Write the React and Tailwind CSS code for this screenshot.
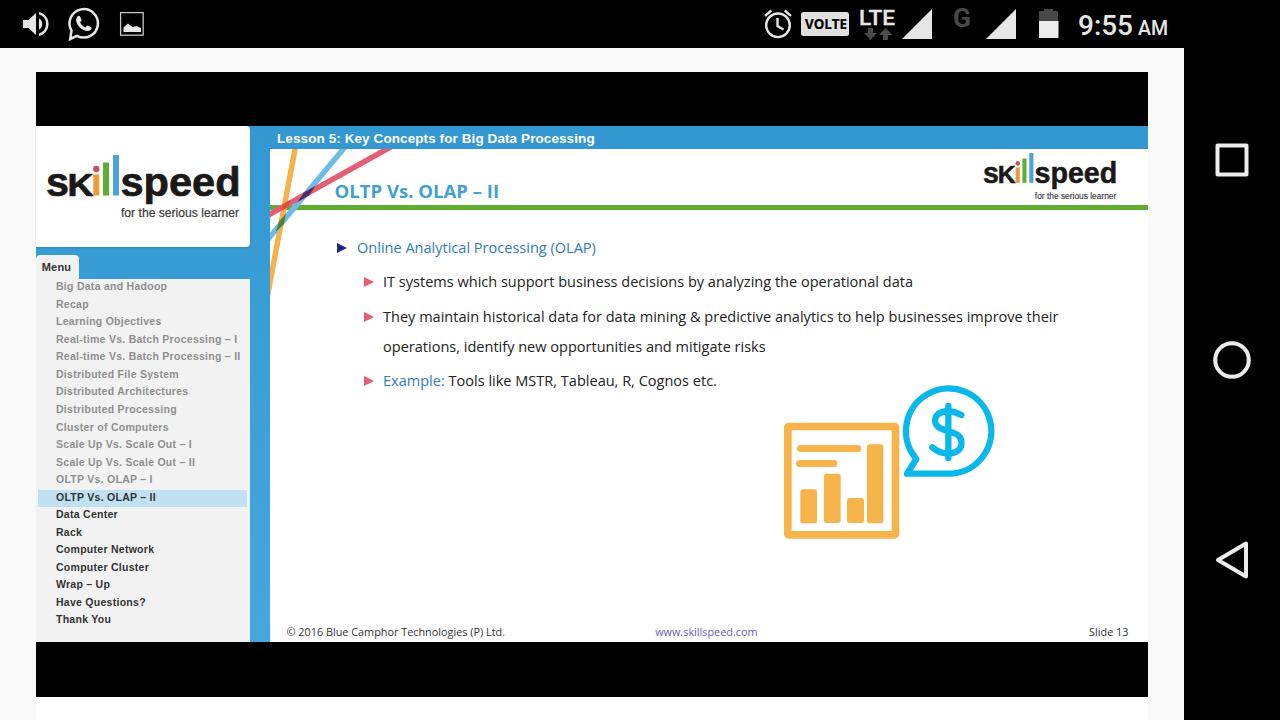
import React from "react";

const menuItems = [
  "Big Data and Hadoop",
  "Recap",
  "Learning Objectives",
  "Real-time Vs. Batch Processing – I",
  "Real-time Vs. Batch Processing – II",
  "Distributed File System",
  "Distributed Architectures",
  "Distributed Processing",
  "Cluster of Computers",
  "Scale Up Vs. Scale Out – I",
  "Scale Up Vs. Scale Out – II",
  "OLTP Vs. OLAP – I",
  "OLTP Vs. OLAP – II",
  "Data Center",
  "Rack",
  "Computer Network",
  "Computer Cluster",
  "Wrap – Up",
  "Have Questions?",
  "Thank You",
];
const activeIndex = 12;

function Logo({ className }) {
  return (
    <svg viewBox="0 0 194 68" preserveAspectRatio="none" className={className} fontFamily="'Liberation Sans', Arial, sans-serif">
      <g fontWeight="700" fill="#1b1818" stroke="#1b1818" strokeWidth="0.7">
        <text x="0" y="40.5" fontSize="41" textLength="23" lengthAdjust="spacingAndGlyphs">s</text>
        <text x="21.5" y="40.5" fontSize="32" textLength="26" lengthAdjust="spacingAndGlyphs">K</text>
        <text x="74.5" y="40.5" fontSize="41" textLength="120" lengthAdjust="spacingAndGlyphs">speed</text>
      </g>
      <rect x="47.3" y="19.5" width="6" height="21" fill="#ee9a3a" />
      <circle cx="50.3" cy="14" r="3.2" fill="#cf4a63" />
      <rect x="57" y="7.5" width="6" height="33" fill="#5fae33" />
      <rect x="67" y="0" width="6" height="40.5" fill="#4ba3d8" />
      <text x="75" y="62" fontSize="12" fill="#3a3a3a" stroke="#3a3a3a" strokeWidth="0.2" textLength="118" lengthAdjust="spacingAndGlyphs">
        for the serious learner
      </text>
    </svg>
  );
}

function StatusBar() {
  return (
    <header className="flex h-12 w-full shrink-0 bg-black">
      <svg viewBox="0 0 200 48" className="h-12 w-[200px]" fill="#e6e6e6">
        <path d="M23 20h5.5l7.5-7v22l-7.5-7H23z" />
        <path d="M39 18.5a6.3 6.3 0 0 1 0 11z" />
        <path d="M39 12v2.6a9.8 9.8 0 0 1 0 18.8V36a12.3 12.3 0 0 0 0-24z" />
        <path d="M71.5 30.500A14.2 14.2 0 1 1 77 35.800L70.2 39z" fill="none" stroke="#e6e6e6" strokeWidth="2.5" />
        <path d="M77.3 16.8c1-1.3 2.4-1.2 2.9 0l1.3 3.2c.2.8-1.3 2-1.4 2.5.9 2.2 3.3 4.2 5.3 4.9.8-.4 1.6-2 2.4-1.8l3.5 1.7c1 .7-.2 2.7-1.5 3.3-3.200 1.400-8.300-1.200-10.900-4.200-2.400-2.900-3.900-6.700-1.600-9.600z" />
        <rect x="120.6" y="12.6" width="22.6" height="22.6" fill="none" stroke="#c4c4c4" strokeWidth="1.3" />
        <path d="M123.500 32v-4.500l4.500-4 4.500 3.500 4-1 4.500 2v4z" />
      </svg>
      <div className="flex-1" />
      <svg viewBox="750 0 530 48" className="h-12 w-[530px]" fontFamily="Roboto, sans-serif">
        <g fill="none" stroke="#e6e6e6" strokeWidth="2.400">
          <circle cx="778" cy="25.300" r="11.800" />
          <path d="M777.500 18v8l6 3.500M765 15.800l6.300-5.300M791 15.800l-6.300-5.300" />
        </g>
        <rect x="801" y="12" width="48" height="24" rx="2.500" fill="#e0e0e0" />
        <text x="805" y="29" fontFamily="'Open Sans', sans-serif" fontWeight="700" fontSize="13.500" fill="#000" stroke="#000" strokeWidth="0.2" textLength="42" lengthAdjust="spacingAndGlyphs">VOLTE</text>
        <text x="859" y="25" fontWeight="500" fontSize="21" fill="#e6e6e6" stroke="#e6e6e6" strokeWidth="0.3" textLength="36" lengthAdjust="spacingAndGlyphs">LTE</text>
        <path d="M868 28h5v5h4l-6.500 7-6.500-7h4zM883 40h5v-5h4.500L885.500 28l-6.500 7h4z" fill="#4a4a4a" />
        <path d="M932 9v30h-30zM1016 9v30h-30z" fill="#e6e6e6" />
        <text x="953" y="27" fontWeight="700" fontSize="26" fill="#484848" textLength="18" lengthAdjust="spacingAndGlyphs">G</text>
        <path d="M1039 21v-10h5v-2h9v2h5v10z" fill="#484848" />
        <path d="M1039 21h19.500v17h-19.500z" fill="#ececec" />
        <g fill="#e6e6e6" fontWeight="500">
          <text x="1078" y="35" fontSize="28" textLength="55" lengthAdjust="spacingAndGlyphs">9:55</text>
          <text x="1138" y="35" fontSize="19.500" textLength="30" lengthAdjust="spacingAndGlyphs">AM</text>
        </g>
      </svg>
    </header>
  );
}

function Sidebar() {
  return (
    <aside className="flex w-[214px] shrink-0 flex-col">
      <div className="flex h-[121px] items-start rounded-r bg-white pt-[29px] pl-[10px] shadow-sm">
        <Logo className="h-[68px] w-[194px]" />
      </div>
      <div className="mt-2 flex h-6 w-[43px] items-center justify-center rounded-t bg-[#f2f2f2] pr-0.5 text-[11px] font-bold text-[#333]">
        <span className="tracking-[0.2px]">Menu</span>
      </div>
      <nav className="flex-1 overflow-hidden bg-[#f2f2f2] pt-[0.300px] pr-[3px] pl-[2px]">
        {menuItems.map((item, i) => (
          <div
            key={item}
            className={
              "h-[17.540px] pl-[18px] text-[10.500px] leading-[15px] font-bold tracking-[0.270px] whitespace-nowrap " +
              (i === activeIndex ? "bg-[#bfe1f1] text-[#333]" : i < activeIndex ? "text-[#8f8f8f]" : "text-[#333]")
            }
          >
            {item}
          </div>
        ))}
      </nav>
    </aside>
  );
}

function Arrow({ className }) {
  return (
    <svg viewBox="0 0 10 10" className={"h-[10px] w-[10px] shrink-0 " + className} fill="currentColor">
      <path d="M0 0l10 5-10 5z" />
    </svg>
  );
}

function Bullet({ children, className = "" }) {
  return (
    <li className={"flex " + className}>
      <Arrow className="mt-[11px] mr-[9px] text-[#e65c74]" />
      <p className="leading-[30px] whitespace-nowrap">{children}</p>
    </li>
  );
}

function Slide() {
  return (
    <article className="relative flex flex-1 flex-col bg-white font-['Open_Sans',sans-serif]">
      <div className="flex h-[56px] items-start justify-between pr-[31.500px] pl-[64.500px]">
        <h1 className="mt-[30px] text-[18.550px] leading-6 font-bold whitespace-nowrap text-[#439fd3]">OLTP Vs. OLAP – II</h1>
        <Logo className="mt-1 h-[50px] w-[134px]" />
      </div>
      <div className="h-[5px] bg-[#5fae32]" />
      <svg viewBox="0 0 130 150" className="absolute top-0 left-0 h-[150px] w-[130px]" fill="none" strokeWidth="5.500">
        <path d="M26-5L-5 160" stroke="#f6b04c" />
        <path d="M77.500-5L-4 92.500" stroke="#6cbce5" />
        <path d="M126-5L-5 68" stroke="#e55d75" />
        <path d="M27.500 53L34 43.500 45.500 37 39 46.500z" fill="#4a2f68" />
        <path d="M6 82.500L9 72.500 16 64.500 14 75z" fill="#597e33" />
        <path d="M11.500 61.500L13 55 20 51.500 18.500 58z" fill="#dc5431" />
      </svg>
      <ul className="mt-[23px] pl-[67px] text-[14.540px] text-[#222]">
        <li className="flex h-[30px] items-center text-[#2f7dbb]">
          <Arrow className="mr-[10px] text-[#26257f]" />
          <span className="whitespace-nowrap">Online Analytical Processing (OLAP)</span>
        </li>
        <li>
          <ul className="pl-[27px]">
            <Bullet className="mt-[3px]">IT systems which support business decisions by analyzing the operational data</Bullet>
            <Bullet className="mt-[4.500px]">
              They maintain historical data for data mining &amp; predictive analytics to help businesses improve their
              <br />
              operations, identify new opportunities and mitigate risks
            </Bullet>
            <Bullet className="mt-1">
              <span className="text-[#2f7dbb]">Example:</span> Tools like MSTR, Tableau, R, Cognos etc.
            </Bullet>
          </ul>
        </li>
      </ul>
      <svg viewBox="0 30 720 480" className="-mt-[14.500px] ml-[500px] h-[160px] w-[240px]">
        <rect x="53.500" y="169.500" width="323" height="325" rx="3" fill="none" stroke="#f7b44b" strokeWidth="23" />
        <g fill="#f7b44b">
          <rect x="81" y="225" width="193" height="21" rx="10.500" />
          <rect x="78" y="270" width="124" height="21" rx="10.500" />
          <rect x="91" y="358" width="50" height="102" rx="8" />
          <rect x="162" y="311" width="50" height="148" rx="8" />
          <rect x="231" y="384" width="51" height="75" rx="8" />
          <rect x="291" y="223" width="49" height="237" rx="8" />
        </g>
        <g fill="none" stroke="#08b8ea" strokeWidth="19" strokeLinecap="round" strokeLinejoin="round">
          <path d="M439 267A128 128 0 1 1 546 311H411z" />
          <path d="M535 108V264M574 135C552 124 525 119 505 132C489 145 493 168 514 176L553 190C582 200 580 236 557 246C533 257 505 248 487 232" />
        </g>
      </svg>
      <footer className="mt-auto grid h-[21px] grid-cols-3 pr-[19.500px] pl-[16.500px] text-[10.850px] leading-[21px] whitespace-nowrap text-[#333]">
        <span>© 2016 Blue Camphor Technologies (P) Ltd.</span>
        <span className="pl-[88px] text-[#6a5cc8]">www.skillspeed.com</span>
        <span className="text-right">Slide 13</span>
      </footer>
    </article>
  );
}

function NavRail() {
  return (
    <aside className="flex w-24 shrink-0 flex-col items-center bg-black">
      <svg viewBox="0 0 96 672" className="h-[672px] w-24" fill="none" stroke="#ececec" strokeWidth="4" strokeLinejoin="round">
        <rect x="33.500" y="97.500" width="29" height="29" />
        <circle cx="48" cy="312" r="16.800" />
        <path d="M62 495.500v33L34 512z" />
      </svg>
    </aside>
  );
}

export default function App() {
  return (
    <div className="flex h-[720px] w-[1280px] flex-col overflow-hidden bg-black font-['Liberation_Sans',Arial,sans-serif]">
      <StatusBar />
      <div className="flex flex-1">
        <main className="flex flex-1 flex-col bg-[#f9f9f9] px-9 pt-6">
          <div className="flex h-[625px] flex-col bg-black pt-[54px]">
            <section className="flex h-[516px] bg-linear-to-b from-[#3398d2] to-[#44a8dd]">
              <Sidebar />
              <div className="ml-5 flex flex-1 flex-col">
                <h2 className="h-[23px] bg-[#3398d2] pl-[7px] text-[13.500px] leading-[25px] font-bold tracking-[0.090px] whitespace-nowrap text-white">
                  Lesson 5: Key Concepts for Big Data Processing
                </h2>
                <Slide />
              </div>
            </section>
          </div>
          <div className="flex-1 bg-white" />
        </main>
        <NavRail />
      </div>
    </div>
  );
}
